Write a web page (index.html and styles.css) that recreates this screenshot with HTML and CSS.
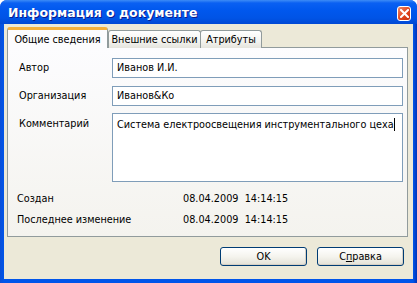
FILE: index.html
```html
<!DOCTYPE html>
<html lang="ru">
<head>
<meta charset="UTF-8">
<title>Информация о документе</title>
<link rel="stylesheet" href="styles.css">
</head>
<body>
<div class="window">
  <div class="titlebar">
    <span class="title">Информация о документе</span>
    <div class="close-btn">
      <svg width="9" height="9" viewBox="0 0 9 9"><path d="M1 1 L8 8 M8 1 L1 8" stroke="#fff" stroke-width="2" stroke-linecap="square"/></svg>
    </div>
  </div>

  <div class="client">
    <div class="tabs">
      <div class="tab active tab-general">Общие сведения</div>
      <div class="tab tab-links">Внешние ссылки</div>
      <div class="tab tab-attrs">Атрибуты</div>
    </div>

    <div class="panel">
      <div class="form">
        <label class="field-label">Автор</label>
        <div class="input">Иванов И.И.</div>
        <label class="field-label">Организация</label>
        <div class="input">Иванов&amp;Ко</div>
        <label class="field-label">Комментарий</label>
        <div class="input memo">Система електроосвещения инструментального цеха<span class="caret"></span></div>
      </div>
      <div class="info">
        <span>Создан</span><span>08.04.2009&nbsp; 14:14:15</span>
        <span>Последнее изменение</span><span>08.04.2009&nbsp; 14:14:15</span>
      </div>
    </div>

    <div class="buttons">
      <button class="btn">OK</button>
      <button class="btn">С<u>п</u>равка</button>
    </div>
  </div>
</div>
</body>
</html>
```

FILE: styles.css
```css
:root {
  --face: #ece9d8;
  --tab-border: #919b9c;
  --input-border: #7f9db9;
  --btn-border: #003c74;
  --text: #000;
}
* { box-sizing: border-box; margin: 0; padding: 0; }
body { font-family: "DejaVu Sans", sans-serif; font-size: 9.7px; color: var(--text); background: #fff; }

.window { width: 417px; height: 283px; display: flex; flex-direction: column; background: linear-gradient(to right, #0a4fd8, #0055ea 4px, #0055ea 413px, #0033b8); border-radius: 7px 7px 0 0; overflow: hidden; }

.titlebar { height: 24px; flex-shrink: 0; display: flex; align-items: center; justify-content: space-between; padding: 0 6px 0 8px; background: linear-gradient(to bottom, #3d8cf6 0, #0a60f2 3px, #0058ee 10px, #0054e6 18px, #0048d4 24px); }
.title { color: #fff; font-weight: bold; font-size: 12.5px; text-shadow: 1px 1px 0 #0a1a8c; }
.close-btn { width: 14px; height: 15px; margin-top: 2px; border: 1px solid #fff; border-radius: 3px; background: linear-gradient(135deg, #f08a6a, #e0451d 55%, #c8300e); display: flex; align-items: center; justify-content: center; }

.client { flex: 1; margin: 0 4px 4px; background: var(--face); padding: 4px 5px 0 3px; display: flex; flex-direction: column; }

.tabs { display: flex; align-items: flex-end; height: 20px; margin-bottom: -1px; position: relative; z-index: 1; }
.tab { height: 18px; display: flex; align-items: center; justify-content: center; border: 1px solid var(--tab-border); border-bottom: none; border-radius: 3px 3px 0 0; background: linear-gradient(#fff, #f3f3ef 60%, #e5e4dd); white-space: nowrap; }
.tab.active { height: 21px; background: #fcfcfe; border-top: 3px solid #f5b13c; }
.tab-general { width: 101px; }
.tab-links { width: 93px; }
.tab-attrs { width: 62px; margin-left: -1px; }

.panel { height: 190px; border: 1px solid var(--tab-border); background: linear-gradient(#fcfcfe, #f4f3ee); display: flex; flex-direction: column; }

.form { display: grid; grid-template-columns: 93px minmax(0, 1fr); row-gap: 8px; padding: 10px 4px 0 11px; }
.field-label { padding-top: 4px; }
.input { height: 20px; border: 1px solid var(--input-border); background: #fff; padding: 3px 4px 0; white-space: nowrap; overflow: hidden; }
.input.memo { height: 69px; margin-top: -1px; padding-top: 4px; }
.caret { display: inline-block; width: 1px; height: 13px; background: #000; vertical-align: -3px; }

.info { display: grid; grid-template-columns: 166px 1fr; grid-auto-rows: 21px; align-items: center; padding: 6px 0 0 9px; }

.buttons { display: flex; justify-content: flex-end; gap: 10px; padding: 10px 4px 0 0; }
.btn { width: 87px; height: 19px; font-family: inherit; font-size: 9.7px; color: #000; border: 1px solid var(--btn-border); border-radius: 3px; background: linear-gradient(#fff, #f5f4ee 50%, #e3e1d6); box-shadow: inset -1px -1px 0 #d6d0c5; }
.btn u { text-decoration: underline; }
```
